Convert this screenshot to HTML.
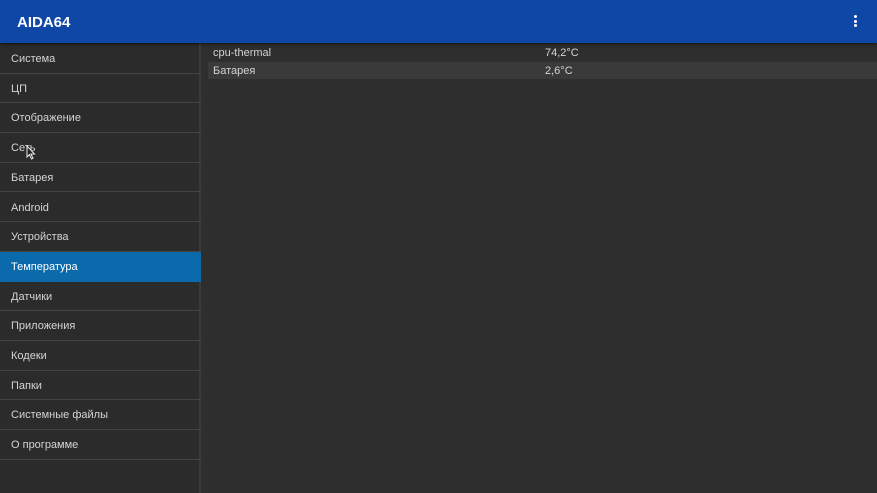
<!DOCTYPE html>
<html><head><meta charset="utf-8"><style>
*{margin:0;padding:0;box-sizing:border-box}
body{width:877px;height:493px;background:#2e2e2e;font-family:"Liberation Sans","DejaVu Sans",sans-serif;overflow:hidden;position:relative;color:#d8d8d8}
.hdr{position:absolute;left:0;top:0;width:877px;height:43px;background:#0f47a6;box-shadow:0 1px 3px rgba(0,0,0,.6);z-index:2}
.hdr .t{position:absolute;left:17px;top:14px;font-size:15px;font-weight:bold;color:#fff}
.dots{position:absolute;left:854px;top:15px;width:4px}
.dots i{display:block;width:3px;height:3px;background:#fff;border-radius:50%;margin-bottom:1.5px}
.side{position:absolute;left:0;top:43px;width:201px;height:450px;background:#2b2b2b;border-right:2px solid #3a3a3a}
.row{position:absolute;left:0;width:201px;height:29.7px;border-bottom:1px solid #444;font-size:11px;color:#d4d4d4;padding-left:11px;line-height:31px}
.sel{background:#0b6aab;color:#fff;border-bottom-color:#0b6aab}
.c{position:absolute;font-size:11px;color:#d4d4d4}
.r2{position:absolute;left:208px;top:62px;width:669px;height:17px;background:#3a3a3a}
</style></head><body>
<div class="hdr"><div class="t">AIDA64</div><div class="dots"><i></i><i></i><i></i></div></div>
<div class="side">
<div class="row" style="top:1px">Система</div>
<div class="row" style="top:30.7px">ЦП</div>
<div class="row" style="top:60.4px">Отображение</div>
<div class="row" style="top:90.1px">Сеть</div>
<div class="row" style="top:119.8px">Батарея</div>
<div class="row" style="top:149.5px">Android</div>
<div class="row" style="top:179.2px">Устройства</div>
<div class="row sel" style="top:208.9px">Температура</div>
<div class="row" style="top:238.6px">Датчики</div>
<div class="row" style="top:268.3px">Приложения</div>
<div class="row" style="top:298px">Кодеки</div>
<div class="row" style="top:327.7px">Папки</div>
<div class="row" style="top:357.4px">Системные файлы</div>
<div class="row" style="top:387.1px">О программе</div>
</div>
<div class="r2"></div>
<div class="c" style="left:213px;top:47px">cpu-thermal</div>
<div class="c" style="left:545px;top:47px">74,2°C</div>
<div class="c" style="left:213px;top:65px">Батарея</div>
<div class="c" style="left:545px;top:65px">2,6°C</div>
<svg style="position:absolute;left:26px;top:145px" width="10" height="15" viewBox="0 0 10 15"><path d="M1 1 L1 12 L3.5 9.5 L5.5 14 L7 13.3 L5 9 L8.5 9 Z" fill="#222" stroke="#eee" stroke-width="1"/></svg>
</body></html>
